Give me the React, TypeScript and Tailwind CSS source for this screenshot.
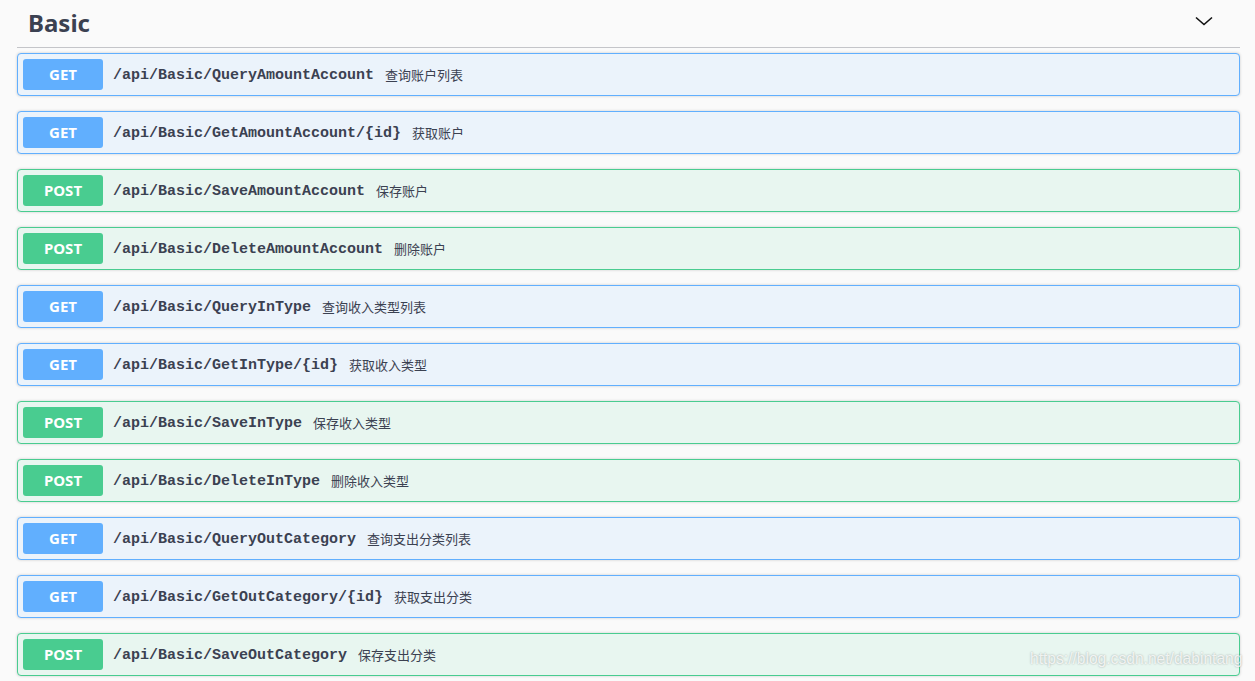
import React from "react";

const rows: { m: "GET" | "POST"; p: string; d: string }[] = [
  { m: "GET", p: "/api/Basic/QueryAmountAccount", d: "查询账户列表" },
  { m: "GET", p: "/api/Basic/GetAmountAccount/{id}", d: "获取账户" },
  { m: "POST", p: "/api/Basic/SaveAmountAccount", d: "保存账户" },
  { m: "POST", p: "/api/Basic/DeleteAmountAccount", d: "删除账户" },
  { m: "GET", p: "/api/Basic/QueryInType", d: "查询收入类型列表" },
  { m: "GET", p: "/api/Basic/GetInType/{id}", d: "获取收入类型" },
  { m: "POST", p: "/api/Basic/SaveInType", d: "保存收入类型" },
  { m: "POST", p: "/api/Basic/DeleteInType", d: "删除收入类型" },
  { m: "GET", p: "/api/Basic/QueryOutCategory", d: "查询支出分类列表" },
  { m: "GET", p: "/api/Basic/GetOutCategory/{id}", d: "获取支出分类" },
  { m: "POST", p: "/api/Basic/SaveOutCategory", d: "保存支出分类" },
];

export default function App() {
  return (
    <div className="relative w-[1255px] h-[681px] overflow-hidden bg-[#fafafa] text-[#3b4151]">
      <div className="ml-[17px] w-[1223px]">
        <div className="h-[48px] flex items-center justify-between border-b border-[#c4c5c9] pl-[11px] pr-[26px]">
          <span
            className="text-[24px] font-bold leading-none pb-[1px] text-[#3b4151]"
            style={{ fontFamily: '"Noto Sans", "Open Sans", sans-serif' }}
          >
            Basic
          </span>
          <svg width="20" height="20" viewBox="0 0 20 20" className="mb-[5px]">
            <path d="M2 6.5 L10 13.5 L18 6.5" fill="none" stroke="#111" strokeWidth="1.6" />
          </svg>
        </div>
        <div className="mt-[5px] flex flex-col gap-[15px]">
          {rows.map((r, i) => {
            const get = r.m === "GET";
            return (
              <div
                key={i}
                className={
                  "h-[43px] flex items-center rounded-[4px] border px-[5px] shadow-[0_0_3px_rgba(0,0,0,0.19)] " +
                  (get ? "bg-[#ebf3fb] border-[#61affe]" : "bg-[#e8f6f0] border-[#49cc90]")
                }
              >
                <div
                  className={
                    "w-[80px] h-[31px] rounded-[3px] flex items-center justify-center text-white text-[15px] font-bold " +
                    (get ? "bg-[#61affe]" : "bg-[#49cc90]")
                  }
                  style={{ fontFamily: '"Noto Sans", "Open Sans", sans-serif' }}
                >
                  {r.m}
                </div>
                <span
                  className="ml-[10px] text-[15px] leading-[20px] pt-[2px] font-bold text-[#3b4151]"
                  style={{ fontFamily: '"Liberation Mono", monospace' }}
                >
                  {r.p}
                </span>
                <span
                  className="ml-[11px] text-[13px] leading-[20px] text-[#3b4151]"
                  style={{ fontFamily: '"Noto Sans CJK SC", sans-serif' }}
                >
                  {r.d}
                </span>
              </div>
            );
          })}
        </div>
      </div>
      <div
        className="absolute left-[1030px] top-[651px] text-[15.6px] leading-none text-white/80 [text-shadow:0_0_2px_rgba(0,0,0,0.35)]"
        style={{ fontFamily: '"Liberation Sans", Arial, sans-serif' }}
      >
        https://blog.csdn.net/dabintang
      </div>
    </div>
  );
}
